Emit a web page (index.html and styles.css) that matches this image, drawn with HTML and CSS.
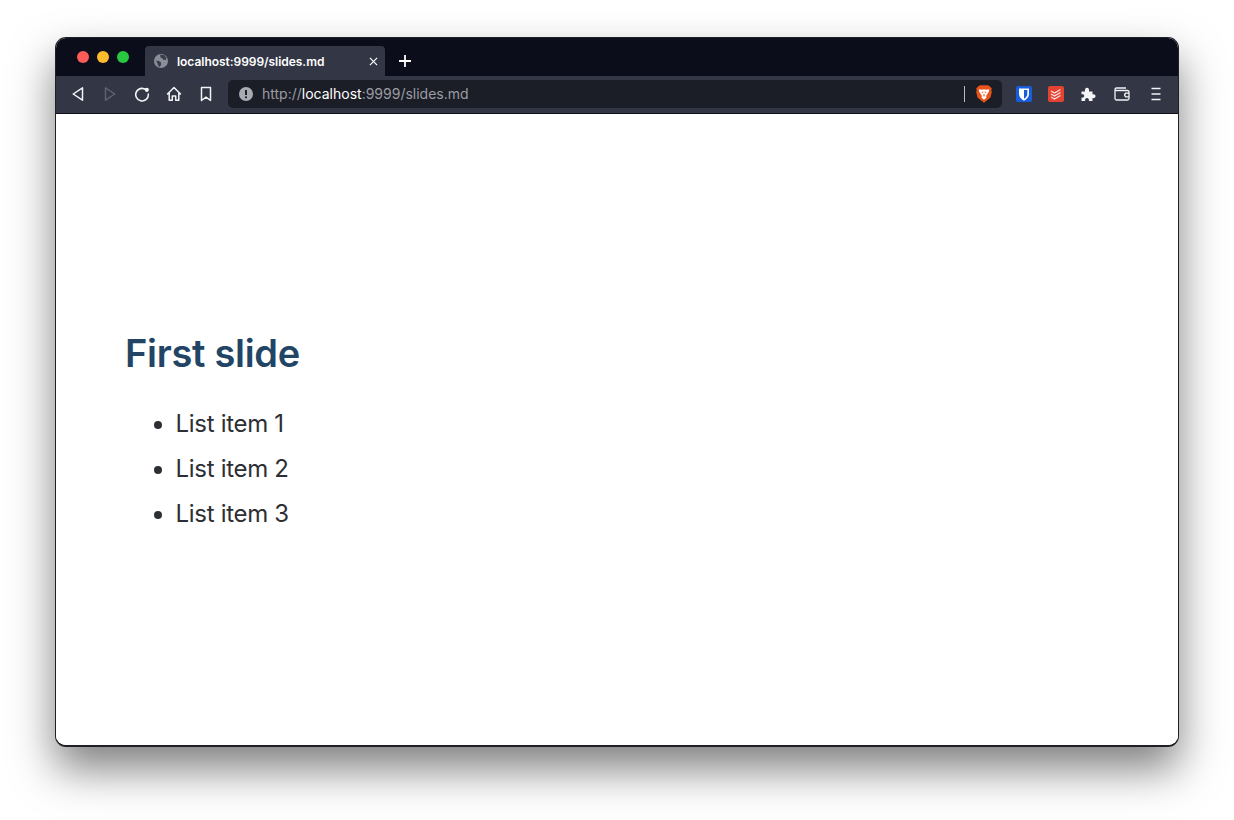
FILE: index.html
```html
<!DOCTYPE html>
<html lang="en">
<head>
<meta charset="utf-8">
<title>localhost:9999/slides.md</title>
<link rel="stylesheet" href="styles.css">
</head>
<body>
<div class="window">
  <div class="tabstrip">
    <div class="lights"><span class="light red"></span><span class="light yellow"></span><span class="light green"></span></div>
    <div class="tab">
      <svg class="favicon" viewBox="0 0 14 14"><circle cx="7" cy="7" r="7" fill="#8b8e98"/><path d="M6 .8 10 .9 12.400 3.500 12 5.800 9.500 6 8.500 4.500 6.500 3.500ZM2 6.500 5 7 7 8.500 7 11 5.500 13 4 11.500 3.500 9.500Z" fill="#3a3e4c"/></svg>
      <span class="tab-title">localhost:9999/slides.md</span>
      <svg class="tab-close" viewBox="0 0 10 10"><path d="M1 1 9 9M9 1 1 9" stroke="#fff" stroke-width="1.300" fill="none"/></svg>
    </div>
    <svg class="new-tab" viewBox="0 0 12 12"><path d="M6 0V12M0 6H12" stroke="#fff" stroke-width="1.800" fill="none"/></svg>
  </div>
  <div class="toolbar">
    <div class="nav">
      <svg class="ic" viewBox="0 0 16 16"><path d="M12.500 1.800V14.200L3.200 8Z" fill="none" stroke="#f4f4f6" stroke-width="1.500" stroke-linejoin="round"/></svg>
      <svg class="ic" viewBox="0 0 16 16"><path d="M3.500 1.800V14.200L12.800 8Z" fill="none" stroke="#5e6270" stroke-width="1.500" stroke-linejoin="round"/></svg>
      <svg class="ic" viewBox="0 0 16 16"><path d="M13 4.800A6.300 6.300 0 1 0 14.300 8" fill="none" stroke="#f4f4f6" stroke-width="1.600" stroke-linecap="round"/><circle cx="12.800" cy="3.800" r="2.100" fill="#f4f4f6"/></svg>
      <svg class="ic" viewBox="0 0 16 16"><path d="M1.500 8 8 1.500 14.500 8M3.200 7V14.200H6.300V10H9.700V14.200H12.800V7" fill="none" stroke="#f4f4f6" stroke-width="1.500" stroke-linejoin="round" stroke-linecap="round"/></svg>
      <svg class="ic" viewBox="0 0 16 16"><path d="M3.500 1.500H12.500V14.500L8 11.200 3.500 14.500Z" fill="none" stroke="#f4f4f6" stroke-width="1.500" stroke-linejoin="round"/></svg>
    </div>
    <div class="urlbar">
      <svg class="info" viewBox="0 0 14 14"><circle cx="7" cy="7" r="7" fill="#a9abb2"/><path d="M7 3V8" stroke="#1c1e27" stroke-width="2"/><circle cx="7" cy="10.300" r="1.100" fill="#1c1e27"/></svg>
      <span class="url"><span class="dim">http://</span>localhost<span class="dim">:9999/slides.md</span></span>
      <span class="sep"></span>
      <svg class="brave" viewBox="0 0 16 18"><path d="M4 .3H12L14 1.500 15.800 3.500 15.300 5.500 15.800 7 14.500 12.500 8 17.800 1.500 12.500 .2 7 .7 5.500 .2 3.500 2 1.500Z" fill="#e8531c"/><path d="M3.200 4.200 6 4.800 8 4.200 10 4.800 12.800 4.200 13.200 6 11 9.500 10 11 10.600 12.500 8 14.800 5.400 12.500 6 11 5 9.500 2.800 6Z" fill="#fff"/><path d="M5.800 7.200H7.300M8.700 7.200H10.200M8 9V11.500" stroke="#e8531c" stroke-width="1.100"/></svg>
    </div>
    <div class="extensions">
      <span class="ext bitwarden"><svg viewBox="0 0 16 16"><path d="M3 2.500H13V8C13 11 10.500 13.500 8 14.800 5.500 13.500 3 11 3 8Z" fill="#fff"/><path d="M8 4V12.800C9.800 11.700 11.300 10.200 11.300 8V4Z" fill="#175ddc"/></svg></span>
      <span class="ext todoist"><svg viewBox="0 0 16 16"><path d="M3 5 6.500 7 12.500 3.500M3 8 6.500 10 12.500 6.500M3 11 6.500 13 12.500 9.500" stroke="#fbe3df" stroke-width="1.200" fill="none"/></svg></span>
      <svg class="ic" viewBox="0 0 16 16"><path d="M1.500 5.500H5C4.500 3.500 5.500 1.800 7 1.800 8.500 1.800 9.500 3.500 9 5.500H12.500V8.500C14.500 8 15.500 9 15.500 10.200 15.500 11.500 14.500 12.500 12.500 12V15H8.800C9.300 13 8.300 12 7 12 5.700 12 4.700 13 5.200 15H1.500V11.500C3.300 12 4.200 11 4.200 9.800 4.200 8.600 3.300 7.800 1.500 8.300Z" fill="#f4f4f6"/></svg>
      <svg class="ic wallet" viewBox="0 0 16 16"><path d="M1 4V12.500Q1 14 2.500 14H13.500Q15 14 15 12.500V6Q15 4.500 13.500 4.500H2.500Q1 4.500 1 3.500 1 2 2.500 2H12" fill="none" stroke="#f4f4f6" stroke-width="1.300"/><path d="M15 7.200H11.500Q9.800 9 11.500 10.800H15" fill="none" stroke="#f4f4f6" stroke-width="1.300"/></svg>
      <svg class="ic menu" viewBox="0 0 16 16"><path d="M3.500 2.500H12.500M3.500 8H12.500M3.500 13.500H12.500" stroke="#f4f4f6" stroke-width="1.500" fill="none"/></svg>
    </div>
  </div>
  <main class="slide">
    <h1 class="slide-title">First slide</h1>
    <ul class="slide-list">
      <li>List item 1</li>
      <li>List item 2</li>
      <li>List item 3</li>
    </ul>
  </main>
</div>
</body>
</html>
```
FILE: styles.css
```css
* { box-sizing: border-box; }
html, body { margin: 0; height: 100%; background: #fff; overflow: hidden; }
body { padding: 37px 55px 0; font-family: Inter, "Liberation Sans", sans-serif; }
.window {
  width: 1124px;
  height: 710px;
  border-radius: 11px;
  border: 1px solid #1f2026;
  border-bottom-width: 2px;
  background: #fff;
  overflow: hidden;
  display: flex;
  flex-direction: column;
  box-shadow: 0 22px 44px rgba(0,0,0,.5);
}
.tabstrip {
  height: 38px;
  flex: none;
  background: #0c0d1a;
  display: flex;
  align-items: flex-end;
}
.lights { display: flex; gap: 8px; width: 89px; padding: 0 0 13px 21px; align-self: flex-end; }
.light { width: 12px; height: 12px; border-radius: 50%; }
.red { background: #fc5b57; }
.yellow { background: #fdbb2d; }
.green { background: #28c840; }
.tab {
  width: 240px;
  height: 30px;
  background: #323645;
  border-radius: 4px 4px 0 0;
  display: flex;
  align-items: center;
  padding: 0 7px 0 9px;
  color: #fff;
}
.favicon { width: 14px; height: 14px; flex: none; }
.tab-title { margin-left: 9px; font-size: 12px; font-weight: 600; flex: 1; white-space: nowrap; letter-spacing: -.04px; }
.tab-close { width: 9px; height: 9px; flex: none; }
.new-tab { width: 12px; height: 12px; margin: 0 0 9px 14px; }
.toolbar {
  height: 38px;
  flex: none;
  background: #323645;
  border-bottom: 1px solid #111218;
  display: flex;
  align-items: center;
  padding-bottom: 1px;
}
.ic { width: 16px; height: 16px; flex: none; }
.nav { display: flex; gap: 16px; padding-left: 14px; width: 172px; }
.urlbar {
  width: 774px;
  height: 28px;
  background: #1c1e27;
  border-radius: 5px;
  display: flex;
  align-items: center;
  padding: 0 10px 0 11px;
}
.info { width: 14px; height: 14px; flex: none; }
.url { margin: 0 0 2px 9px; font-size: 14px; color: #fff; flex: 1; white-space: nowrap; }
.dim { color: #9a9ca3; }
.sep { width: 1px; height: 16px; background: #b9bac0; margin-right: 11px; }
.brave { width: 16px; height: 18px; flex: none; }
.extensions { display: flex; align-items: center; gap: 16px; padding-left: 14px; }
.wallet, .menu { margin-left: 2px; }
.ext { width: 16px; height: 16px; border-radius: 2px; display: block; flex: none; }
.ext svg { display: block; width: 16px; height: 16px; }
.bitwarden { background: #175ddc; }
.todoist { background: #e44232; }
.slide { flex: 1; padding: 215px 0 0 69px; background: #fff; }
.slide-title { margin: 0; font-size: 38px; line-height: 48px; font-weight: 600; color: #234565; letter-spacing: -.3px; }
.slide-list { margin: 32px 0 0; padding: 0 0 0 50.5px; font-size: 24px; line-height: 29px; color: #2c2f33; letter-spacing: -.3px; }
.slide-list li { margin-bottom: 16px; }
```
